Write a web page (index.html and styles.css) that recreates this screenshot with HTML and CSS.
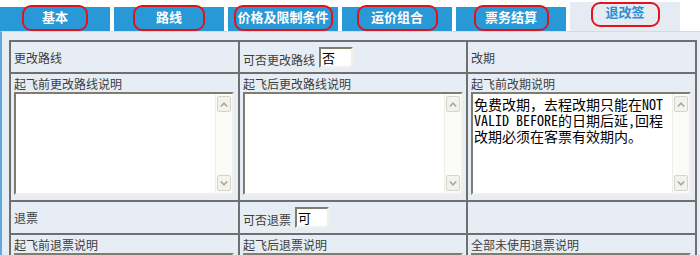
FILE: index.html
```html
<!DOCTYPE html>
<html lang="zh-CN">
<head>
    <meta charset="UTF-8">
    <meta name="viewport" content="width=device-width, initial-scale=1.0">
    <title>退改签</title>
    <link rel="stylesheet" href="styles.css">
</head>
<body>
    <div class="tabs">
        <div class="tab"><span class="mark mark-basic">基本</span></div>
        <div class="tab"><span class="mark mark-route">路线</span></div>
        <div class="tab"><span class="mark mark-price">价格及限制条件</span></div>
        <div class="tab"><span class="mark mark-combo">运价组合</span></div>
        <div class="tab"><span class="mark mark-settle">票务结算</span></div>
        <div class="tab active"><span class="mark mark-refund">退改签</span></div>
    </div>
    <div class="panel">
        <table class="rules">
            <colgroup>
                <col class="col-wide">
                <col class="col-mid">
                <col class="col-wide">
            </colgroup>
            <tr class="row-head">
                <td>更改路线</td>
                <td>
                    <div class="field">
                        <label for="can-reroute">可否更改路线</label>
                        <input type="text" id="can-reroute" value="否">
                    </div>
                </td>
                <td>改期</td>
            </tr>
            <tr class="row-memo">
                <td>
                    <div class="caption">起飞前更改路线说明</div>
                    <div class="memo">
                        <textarea></textarea>
                        <div class="scroll">
                            <span class="btn"><svg width="8" height="5" viewBox="0 0 8 5"><polyline points="0.8,4.5 4,1.2 7.2,4.5"/></svg></span>
                            <span class="track"></span>
                            <span class="btn"><svg width="8" height="5" viewBox="0 0 8 5"><polyline points="0.8,0.5 4,3.8 7.2,0.5"/></svg></span>
                        </div>
                    </div>
                </td>
                <td>
                    <div class="caption">起飞后更改路线说明</div>
                    <div class="memo">
                        <textarea></textarea>
                        <div class="scroll">
                            <span class="btn"><svg width="8" height="5" viewBox="0 0 8 5"><polyline points="0.8,4.5 4,1.2 7.2,4.5"/></svg></span>
                            <span class="track"></span>
                            <span class="btn"><svg width="8" height="5" viewBox="0 0 8 5"><polyline points="0.8,0.5 4,3.8 7.2,0.5"/></svg></span>
                        </div>
                    </div>
                </td>
                <td>
                    <div class="caption">起飞前改期说明</div>
                    <div class="memo">
                        <textarea>免费改期，去程改期只能在NOT VALID BEFORE的日期后延,回程改期必须在客票有效期内。</textarea>
                        <div class="scroll">
                            <span class="btn"><svg width="8" height="5" viewBox="0 0 8 5"><polyline points="0.8,4.5 4,1.2 7.2,4.5"/></svg></span>
                            <span class="track"></span>
                            <span class="btn"><svg width="8" height="5" viewBox="0 0 8 5"><polyline points="0.8,0.5 4,3.8 7.2,0.5"/></svg></span>
                        </div>
                    </div>
                </td>
            </tr>
            <tr class="row-head row-refund">
                <td>退票</td>
                <td>
                    <div class="field">
                        <label for="can-refund">可否退票</label>
                        <input type="text" id="can-refund" value="可">
                    </div>
                </td>
                <td></td>
            </tr>
            <tr class="row-memo">
                <td>
                    <div class="caption">起飞前退票说明</div>
                    <div class="memo">
                        <textarea></textarea>
                        <div class="scroll">
                            <span class="btn"><svg width="8" height="5" viewBox="0 0 8 5"><polyline points="0.8,4.5 4,1.2 7.2,4.5"/></svg></span>
                            <span class="track"></span>
                            <span class="btn"><svg width="8" height="5" viewBox="0 0 8 5"><polyline points="0.8,0.5 4,3.8 7.2,0.5"/></svg></span>
                        </div>
                    </div>
                </td>
                <td>
                    <div class="caption">起飞后退票说明</div>
                    <div class="memo">
                        <textarea></textarea>
                        <div class="scroll">
                            <span class="btn"><svg width="8" height="5" viewBox="0 0 8 5"><polyline points="0.8,4.5 4,1.2 7.2,4.5"/></svg></span>
                            <span class="track"></span>
                            <span class="btn"><svg width="8" height="5" viewBox="0 0 8 5"><polyline points="0.8,0.5 4,3.8 7.2,0.5"/></svg></span>
                        </div>
                    </div>
                </td>
                <td>
                    <div class="caption">全部未使用退票说明</div>
                    <div class="memo">
                        <textarea></textarea>
                        <div class="scroll">
                            <span class="btn"><svg width="8" height="5" viewBox="0 0 8 5"><polyline points="0.8,4.5 4,1.2 7.2,4.5"/></svg></span>
                            <span class="track"></span>
                            <span class="btn"><svg width="8" height="5" viewBox="0 0 8 5"><polyline points="0.8,0.5 4,3.8 7.2,0.5"/></svg></span>
                        </div>
                    </div>
                </td>
            </tr>
        </table>
    </div>
</body>
</html>
```

FILE: styles.css
```css
html, body {
    margin: 0;
    overflow: hidden;
}
body {
    font-family: "Noto Sans CJK SC", sans-serif;
    font-size: 12px;
    color: #3d3d3d;
    background: #fff;
}
.tabs {
    display: flex;
    gap: 4px;
    height: 31px;
    align-items: flex-end;
}
.tab {
    width: 110px;
    height: 24px;
    background: #2899d6;
    display: flex;
    justify-content: center;
    align-items: flex-start;
}
.tab.active {
    height: 29px;
    background: #e4ebf3;
}
.mark {
    box-sizing: border-box;
    height: 26px;
    margin-top: -2px;
    padding-top: 2px;
    border: 2px solid #e3131b;
    border-radius: 9px;
    font-size: 13px;
    font-weight: bold;
    line-height: 16px;
    color: #fff;
    text-align: center;
}
.active .mark {
    height: 25px;
    margin-top: 0;
    padding-top: 0;
    color: #2a8fd4;
}
.mark-basic { width: 66px; }
.mark-route { width: 72px; }
.mark-price { width: 99px; }
.mark-combo { width: 81px; }
.mark-settle { width: 75px; }
.mark-refund { width: 69px; }
.panel {
    height: 300px;
    padding: 8px 0 0 7px;
    background: #e6edf5;
    border-top: 1px solid #cfdbe7;
    border-left: 2px solid #5ea9df;
}
.rules {
    table-layout: fixed;
    width: 688px;
    border-collapse: separate;
    border-spacing: 0;
    border: 1px solid #6f6f6f;
}
.col-wide { width: 229px; }
.col-mid { width: 228px; }
.rules td {
    box-sizing: border-box;
    padding: 0 4px 0 3px;
    border: 1px solid #6f6f6f;
}
.row-head td {
    height: 32px;
    vertical-align: middle;
}
.row-refund td {
    height: 33px;
}
.row-memo td {
    height: 128px;
    padding-top: 2px;
    vertical-align: top;
}
.caption {
    line-height: 16px;
}
.field {
    display: flex;
    align-items: flex-end;
    gap: 4px;
}
.field label {
    line-height: 14px;
    margin-bottom: 1px;
}
.field input {
    box-sizing: border-box;
    width: 34px;
    height: 21px;
    margin: 0;
    padding: 0 1px;
    font-family: "Noto Sans CJK SC", sans-serif;
    font-size: 13px;
    color: #000;
    background: #fff;
    border: 2px solid;
    border-color: #7f7c70 #f1f0ea #f1f0ea #7f7c70;
    outline: none;
}
.memo {
    box-sizing: border-box;
    width: 220px;
    height: 103px;
    display: flex;
    background: #fff;
    border: 2px solid;
    border-color: #7f7c70 #f1f0ea #f1f0ea #7f7c70;
}
.memo textarea {
    flex: 1;
    min-width: 0;
    margin: 0;
    padding: 2px 1px;
    border: 0;
    resize: none;
    overflow: hidden;
    outline: none;
    background: transparent;
    color: #000;
    font-family: "Noto Sans Mono CJK SC", "Liberation Mono", "Noto Sans CJK SC", monospace;
    font-size: 14px;
    line-height: 16px;
}
.scroll {
    box-sizing: border-box;
    width: 17px;
    padding: 2px 1px;
    display: flex;
    flex-direction: column;
    background: #fbfbf7;
    border-left: 1px solid #efeee6;
}
.btn {
    height: 14px;
    display: flex;
    align-items: center;
    justify-content: center;
    background: #f3f3ee;
    border: 1px solid #d6d5cc;
    border-radius: 2px;
}
.btn polyline {
    fill: none;
    stroke: #a9a89f;
    stroke-width: 1.6;
}
.track {
    flex: 1;
}
```
